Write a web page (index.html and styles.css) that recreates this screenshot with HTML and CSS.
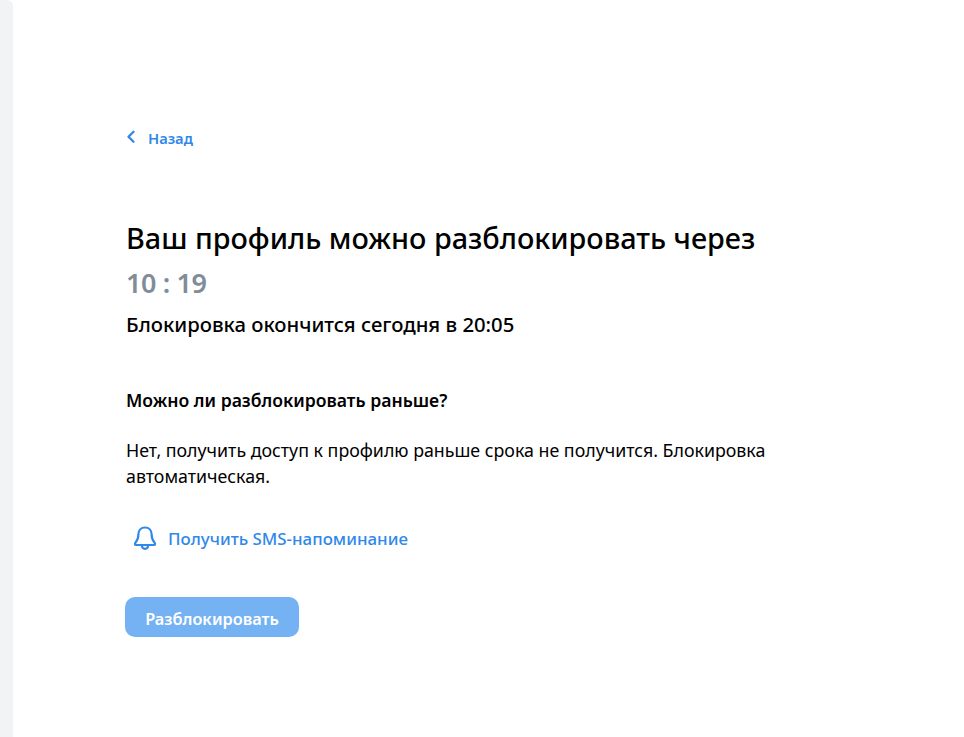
FILE: index.html
```html
<!DOCTYPE html>
<html lang="ru">
<head>
<meta charset="utf-8">
<title>Профиль заблокирован</title>
<link rel="stylesheet" href="styles.css">
</head>
<body>
<div class="page">
  <aside class="rail"></aside>
  <main class="content">
    <a class="back" href="#">
      <svg class="back-icon" width="9" height="14" viewBox="0 0 9 14" fill="none"><path d="M7.500 1.800 2.500 6.800l5 5" stroke="#2f88ea" stroke-width="2.300" stroke-linecap="round" stroke-linejoin="round"/></svg>
      <span>Назад</span>
    </a>
    <h1 class="title">Ваш профиль можно разблокировать через</h1>
    <div class="timer">10 : 19</div>
    <div class="until">Блокировка окончится сегодня в 20:05</div>
    <h2 class="question">Можно ли разблокировать раньше?</h2>
    <p class="answer">Нет, получить доступ к профилю раньше срока не получится. Блокировка автоматическая.</p>
    <a class="remind" href="#">
      <svg class="bell" width="26" height="26" viewBox="0 0 26 26" fill="none"><path d="M13 2.500c-4 0-6.600 3-6.600 6.800 0 3.700-.8 5.800-2.600 7.900-.6.7-.9 1.200-.9 1.700 0 .7.6 1.100 1.400 1.100h17.400c.8 0 1.400-.4 1.400-1.100 0-.5-.3-1-.9-1.700-1.800-2.100-2.600-4.200-2.600-7.900 0-3.800-2.600-6.800-6.600-6.800Z" stroke="#2f88ea" stroke-width="2.200" stroke-linejoin="round"/><path d="M9.800 20.500c.2 2 1.500 3.300 3.200 3.300s3-1.300 3.200-3.300" stroke="#2f88ea" stroke-width="2.200"/></svg>
      <span>Получить SMS-напоминание</span>
    </a>
    <button class="unlock" type="button">Разблокировать</button>
  </main>
</div>
</body>
</html>
```
FILE: styles.css
```css
* { box-sizing: border-box; }
html, body { margin: 0; height: 100%; }
body { background: #fff; font-family: "Noto Sans", "Open Sans", sans-serif; color: #000; }
.page { display: flex; min-height: 737px; }
.rail { width: 13px; background: #f1f3f5; flex: none; border-top-right-radius: 6px; }
.content { flex: 1; padding: 128px 0 0 113px; }
a { text-decoration: none; }
.back { display: flex; align-items: center; gap: 13px; height: 20px; color: #2f88ea; font-size: 14.700px; font-weight: 600; }
.back-icon { flex: none; margin-top: -3px; }
.title { margin: 70px 0 0; font-size: 28.800px; line-height: 40px; font-weight: 500; }
.timer { margin-top: 7px; font-size: 27px; line-height: 36px; font-weight: 600; letter-spacing: -0.4px; color: #818c99; }
.until { margin-top: 9px; font-size: 20.300px; line-height: 28px; font-weight: 500; }
.question { margin: 50px 0 0; font-size: 17.600px; line-height: 24px; font-weight: 600; }
.answer { margin: 25px 0 0; width: 680px; font-size: 17.800px; line-height: 26px; }
.remind { display: flex; align-items: center; gap: 10px; margin-top: 35px; height: 28px; color: #2f88ea; font-size: 16.900px; font-weight: 500; padding-left: 6px; }
.bell { flex: none; }
.unlock { display: block; margin: 45px 0 0 -1px; width: 174px; height: 40px; padding: 3px 0 0; border: 0; border-radius: 10px; background: #74b2f3; color: #fff; font: 600 16.300px "Noto Sans", "Open Sans", sans-serif; }
```
